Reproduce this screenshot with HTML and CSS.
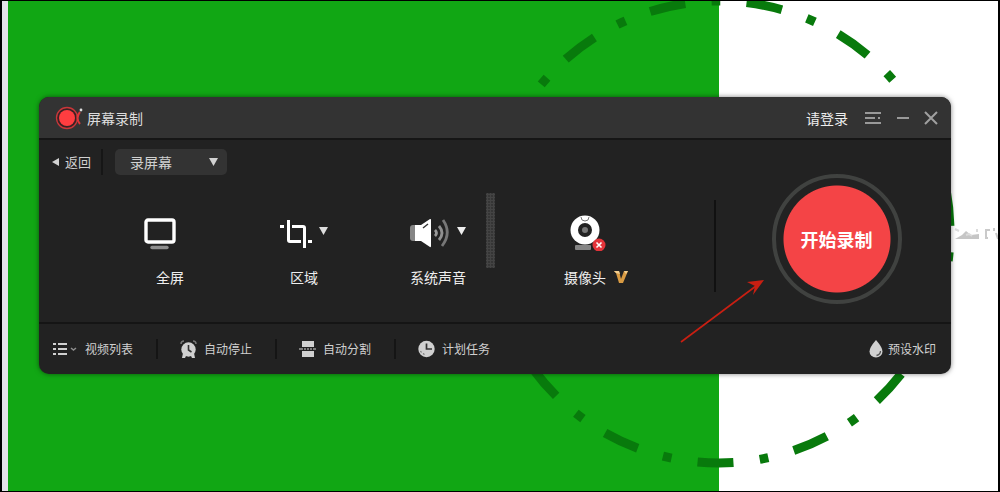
FILE: index.html
```html
<!DOCTYPE html>
<html lang="zh-CN">
<head>
  <meta charset="UTF-8">
  <meta name="viewport" content="width=device-width, initial-scale=1.0">
  <title>屏幕录制</title>
  <link rel="stylesheet" href="styles.css">
</head>
<body>

  <div class="desktop">
    <!-- Desktop behind the recorder -->
    <div class="wallpaper"></div>
    <svg class="selection-ring" width="480" height="490" viewBox="480 1 480 490" aria-hidden="true">
      <path d="M488 232A231 231 0 1 1 950 232A231 231 0 1 1 488 232" fill="none" stroke="#087a0c" stroke-width="9" stroke-dasharray="36 26.4 8.8 26.4"/>
    </svg>
    <svg class="fragment" width="46" height="18" viewBox="0 0 46 18" aria-hidden="true">
      <path d="M1 14l7-4 4-4 5 4 8-1v5z" fill="#c6c6c6"/>
      <path d="M1 4l4 2M12 10l3-1 3 2M23 4v3" fill="none" stroke="#dcdcdc" stroke-width="2"/>
      <path d="M32 4v10M32 5h4M32 13h2M40 3v3M42 8l2 6" fill="none" stroke="#cacaca" stroke-width="2"/>
    </svg>

    <main class="recorder">
      <header class="titlebar">
        <svg class="logo" width="28" height="24" viewBox="0 0 28 24" aria-hidden="true">
          <circle cx="12" cy="12" r="10.5" fill="#3a2223" stroke="#c8373a" stroke-width="1.3"/>
          <circle cx="12" cy="12" r="8" fill="#ff3d40"/>
          <path d="M25 6q-5 6 0 12" fill="none" stroke="#df3639" stroke-width="2"/>
          <circle cx="26" cy="4" r="1.4" fill="#ddd"/>
        </svg>
        <h1>屏幕录制</h1>
        <button class="login">请登录</button>
        <button class="window-btn" aria-label="菜单">
          <svg width="18" height="14" viewBox="0 0 18 14"><path d="M1 2h16M1 7h10M14 7h2M1 12h16" stroke="#999" stroke-width="2"/></svg>
        </button>
        <button class="window-btn" aria-label="最小化">
          <svg width="14" height="14" viewBox="0 0 14 14"><path d="M1 7h12" stroke="#999" stroke-width="2"/></svg>
        </button>
        <button class="window-btn" aria-label="关闭">
          <svg width="14" height="14" viewBox="0 0 14 14"><path d="M1 1l12 12M13 1L1 13" stroke="#a0a0a0" stroke-width="2"/></svg>
        </button>
      </header>

      <section class="content">
        <div class="setup">
          <div class="mode-bar">
            <button class="back">
              <svg width="7" height="8" viewBox="0 0 7 8" aria-hidden="true"><path d="M7 0v8L0 4z" fill="#d2d2d2"/></svg>
              返回
            </button>
            <div class="mode">
              <select aria-label="录制模式">
                <option>录屏幕</option>
              </select>
              <svg class="mode-caret" width="9" height="8" viewBox="0 0 9 8" aria-hidden="true"><path d="M0 0h9L4.5 8z" fill="#d2d2d2"/></svg>
            </div>
          </div>

          <div class="sources">
            <button class="source">
              <span class="source-icon single">
                <svg width="32" height="34" viewBox="0 0 32 34" aria-hidden="true">
                  <rect x="2" y="4" width="28" height="22" rx="2" fill="none" stroke="#fff" stroke-width="3.4"/>
                  <path d="M8 31.5h15" stroke="#8e8e8e" stroke-width="3.4" stroke-linecap="round"/>
                </svg>
              </span>
              <span>全屏</span>
            </button>

            <button class="source">
              <span class="source-icon">
                <svg width="32" height="34" viewBox="0 0 32 34" aria-hidden="true">
                  <path d="M0 10.5h4M8.5 4v20q0 1.5 1.5 1.5h11M12 10.5h11q1.5 0 1.5 1.5v20M28 25.5h4" fill="none" stroke="#fff" stroke-width="3"/>
                </svg>
                <svg class="caret" width="9" height="8" viewBox="0 0 9 8" aria-hidden="true"><path d="M0 0h9L4.5 8z" fill="#ddd"/></svg>
              </span>
              <span>区域</span>
            </button>

            <button class="source">
              <span class="source-icon">
                <svg width="40" height="34" viewBox="0 0 40 34" aria-hidden="true">
                  <path d="M0 12q0-3 3-3h3v16H3q-3 0-3-3z" fill="#858585"/>
                  <path d="M5 9h6l9-6q1-.5 1 1v26q0 1.5-1 1l-9-6H5z" fill="#fff"/>
                  <path d="M13 12l5-4" stroke="#333" stroke-width="1.5"/>
                  <path d="M25 14q3 3 0 6" fill="none" stroke="#999" stroke-width="2.8"/>
                  <path d="M29 10q6 7 0 14" fill="none" stroke="#909090" stroke-width="2.8"/>
                  <path d="M33 4q9 13-1 26" fill="none" stroke="#777" stroke-width="2.8"/>
                </svg>
                <svg class="caret" width="9" height="8" viewBox="0 0 9 8" aria-hidden="true"><path d="M0 0h9L4.5 8z" fill="#eee"/></svg>
              </span>
              <span>系统声音</span>
            </button>

            <div class="level-meter"></div>

            <button class="source">
              <span class="source-icon camera">
                <svg width="36" height="36" viewBox="0 0 36 36" aria-hidden="true">
                  <rect x="5" y="30" width="16" height="5" rx="1" fill="#858585"/>
                  <circle cx="15" cy="15" r="14.5" fill="#fff"/>
                  <circle cx="15" cy="15" r="5" fill="#777" stroke="#222" stroke-width="4"/>
                  <path d="M11 2q0 4 4 4t4-4" fill="none" stroke="#777" stroke-width="1"/>
                  <circle cx="29" cy="30" r="6.5" fill="#e3343a"/>
                  <path d="M26.5 27.5l5 5M31.5 27.5l-5 5" stroke="#fff" stroke-width="1.6"/>
                </svg>
              </span>
              <span class="vip-label">摄像头
                <svg width="14" height="14" viewBox="0 0 14 14" aria-hidden="true">
                  <path d="M0 1h5l2 8 3-8h4L9 13H5L2 3z" fill="#d99b43"/>
                  <path d="M0 1h5l1 3-4-1zM10 1h4l-2 3z" fill="#f3cf91"/>
                </svg>
              </span>
            </button>
          </div>
        </div>

        <div class="record">
          <button class="record-btn">开始录制</button>
        </div>
      </section>

      <footer class="tools">
        <button class="tool">
          <svg class="list-icon" width="24" height="14" viewBox="0 0 24 14" aria-hidden="true">
            <path d="M0 2h3M5 2h9M0 7h3M5 7h9M0 12h3M5 12h9" stroke="#d0d0d0" stroke-width="2"/>
            <path d="M18 6l2.5 2L23 6" fill="none" stroke="#8d8d8d" stroke-width="1.5"/>
          </svg>
          视频列表
        </button>
        <button class="tool">
          <svg width="17" height="18" viewBox="0 0 17 18" aria-hidden="true">
            <path d="M1 4q0-3 3-3M13 1q3 0 3 3" fill="none" stroke="#777" stroke-width="1.5"/>
            <path d="M3 13l-1 5h3l1-2h5l1 2h3l-1-5z" fill="#d0d0d0"/>
            <circle cx="8.5" cy="9.5" r="7.2" fill="#d0d0d0"/>
            <path d="M8.5 5v5l3 2" fill="none" stroke="#333" stroke-width="1.6"/>
          </svg>
          自动停止
        </button>
        <button class="tool">
          <svg width="17" height="18" viewBox="0 0 17 18" aria-hidden="true">
            <path d="M3 1h12v6H3zM3 11h12v6H3z" fill="#d0d0d0"/>
            <path d="M0 9h4M5 9h2M8 9h2M11 9h2M14 9h3" stroke="#999" stroke-width="1.5"/>
          </svg>
          自动分割
        </button>
        <button class="tool">
          <svg width="17" height="18" viewBox="0 0 17 18" aria-hidden="true">
            <circle cx="8.5" cy="9" r="8.2" fill="#d0d0d0"/>
            <path d="M8.5 3.5V9H14" fill="none" stroke="#333" stroke-width="1.7"/>
            <path d="M2.5 11l1 1.5M5 13.5l1.5 1" stroke="#777" stroke-width="1.2"/>
          </svg>
          计划任务
        </button>
        <button class="tool watermark">
          <svg width="14" height="18" viewBox="0 0 14 18" aria-hidden="true">
            <path d="M7 0q6.5 7.5 6.5 11.5a6.5 6 0 0 1-13 0Q.5 7.5 7 0z" fill="#d0d0d0"/>
            <path d="M11.5 11q0 3.5-4 4.5" fill="none" stroke="#555" stroke-width="1.3"/>
          </svg>
          预设水印
        </button>
      </footer>

      <!-- Pointer to the record button -->
      <svg class="pointer" width="86" height="66" viewBox="0 0 86 66" aria-hidden="true">
        <path d="M1 64L76 8" stroke="#c91f12" stroke-width="1.6"/>
        <path d="M84 2L67 4l8 4-2 9z" fill="#c91f12"/>
      </svg>
    </main>
  </div>

</body>
</html>
```
FILE: styles.css
```css
* {
  box-sizing: border-box;
}

body {
  margin: 0;
  font-family: "Noto Sans CJK SC", sans-serif;
  font-size: 14px;
  line-height: 20px;
  color: #eee;
}

h1 {
  margin: 0;
  font-size: 14px;
  font-weight: 400;
  color: #ddd;
}

button,
select {
  font: inherit;
  color: inherit;
  border: none;
  background: none;
  padding: 0;
  cursor: pointer;
}

svg {
  display: block;
  flex: none;
}

.desktop {
  position: relative;
  min-height: 100vh;
  padding: 96px 47px 96px 37px;
  border: solid #000;
  border-width: 1px 2px 1px 2px;
  background-color: #fff;
  overflow: hidden;
}

.wallpaper {
  position: absolute;
  top: 0;
  bottom: 0;
  left: 0;
  width: 72%;
  border-left: 6px solid #e4e2e8;
  background-color: #11a714;
}

.selection-ring {
  position: absolute;
  top: 0;
  right: 38px;
}

.fragment {
  position: absolute;
  top: 224px;
  right: -2px;
}

.recorder {
  position: relative;
  border-radius: 10px;
  background-color: #222;
  box-shadow: 0 0 5px rgba(0, 0, 0, 0.5);
}

.titlebar {
  display: flex;
  align-items: center;
  height: 43px;
  padding: 0 13px 0 16px;
  border-bottom: 2px solid #161616;
  border-radius: 10px 10px 0 0;
  background-color: #333;
}

.logo {
  margin-right: 4px;
}

.login {
  margin-left: auto;
  margin-right: 16px;
}

.window-btn + .window-btn {
  margin-left: 14px;
}

.content {
  display: flex;
  height: 184px;
  border-bottom: 2px solid #151515;
}

.setup {
  flex: 1;
}

.mode-bar {
  display: flex;
  padding: 9px 0 0 13px;
}

.back {
  display: flex;
  align-items: center;
  gap: 6px;
  padding-right: 10px;
  margin-right: 12px;
  border-right: 2px solid #161616;
  font-size: 13px;
  color: #d0d0d0;
}

.mode {
  position: relative;
}

.mode select {
  display: block;
  appearance: none;
  width: 112px;
  height: 26px;
  padding: 0 30px 0 15px;
  border-radius: 5px;
  background-color: #333;
  color: #d0d0d0;
}

.mode-caret {
  position: absolute;
  top: 9px;
  right: 9px;
  pointer-events: none;
}

.sources {
  display: flex;
  padding: 18px 0 0 83px;
}

.source {
  display: flex;
  flex-direction: column;
  align-items: center;
  gap: 16px;
  width: 96px;
  margin-right: 38px;
  padding-top: 22px;
}

.source-icon {
  display: flex;
  align-items: center;
  gap: 7px;
  height: 36px;
}

.single {
  padding-right: 20px;
}

.camera {
  padding-right: 16px;
}

.caret {
  margin-bottom: 4px;
}

.source:nth-child(3) {
  margin-right: 0;
}

.level-meter {
  width: 9px;
  height: 75px;
  margin-right: 53px;
  background-image: radial-gradient(circle, #444 1px, transparent 2px);
  background-size: 3px 3px;
}

.vip-label {
  display: flex;
  align-items: center;
  gap: 8px;
}

.record {
  display: flex;
  align-items: center;
  justify-content: center;
  width: 237px;
  padding: 16px 0 0 8px;
  background: linear-gradient(#111, #111) 0 60px / 2px 92px no-repeat;
}

.record-btn {
  width: 130px;
  height: 130px;
  border: 4px solid #404240;
  border-radius: 50%;
  background: radial-gradient(circle, #f44446 53px, #222 54px);
  font-size: 18px;
  font-weight: 700;
  color: #fff;
}

.tools {
  display: flex;
  align-items: center;
  height: 50px;
  padding: 0 15px 0 14px;
  font-size: 12px;
  color: #d0d0d0;
}

.tool {
  display: flex;
  align-items: center;
  gap: 7px;
}

.tool + .tool {
  margin-left: 23px;
  padding-left: 22px;
  border-left: 2px solid #151515;
}

.list-icon {
  margin-right: 1px;
}

.tools .watermark {
  margin-left: auto;
  padding-left: 0;
  border-left: none;
  gap: 5px;
}

.pointer {
  position: absolute;
  right: 185px;
  bottom: 30px;
}
```
